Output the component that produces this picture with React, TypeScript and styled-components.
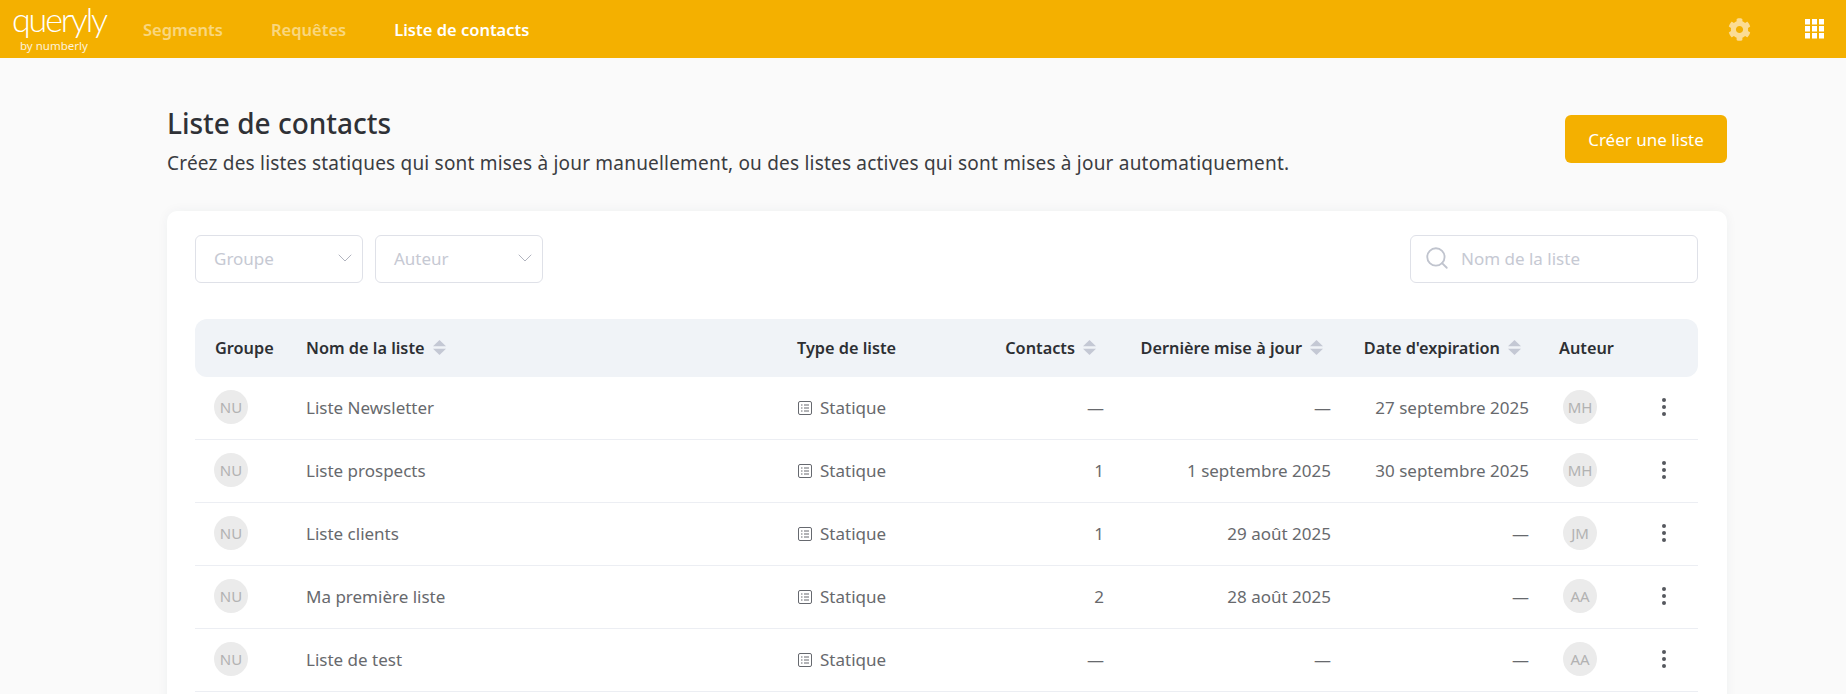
import React from "react";
import styled, { createGlobalStyle } from "styled-components";
import { FaCog } from "react-icons/fa";
import { ChevronDown, Search } from "lucide-react";

const GlobalStyle = createGlobalStyle`
  html, body {
    margin: 0;
    height: 100%;
    overflow: hidden;
    background: #fafafa;
    font-family: "Noto Sans", "Open Sans", sans-serif;
  }
  * {
    box-sizing: border-box;
  }
`;

const TopBar = styled("header")`
  height: 58px;
  background: #f4b000;
  display: flex;
  align-items: center;
  padding-right: 22px;
`;

const Logo = styled("div")`
  width: 143px;
  align-self: flex-start;
  padding: 2px 0 0 12px;
  color: white;
  display: flex;
  flex-direction: column;
  align-items: flex-start;
`;

const LogoName = styled("span")`
  font-family: "Lato", sans-serif;
  font-weight: 300;
  font-size: 34px;
  line-height: 34px;
  letter-spacing: -2.1px;
`;

const LogoSub = styled("span")`
  font-size: 11.5px;
  line-height: 14px;
  margin: 3px 0 0 8px;
  opacity: 0.85;
`;

const Nav = styled("nav")`
  display: flex;
  gap: 48px;
  flex: 1;
`;

const NavLink = styled("a")<{ $active?: boolean }>`
  font-size: 16.5px;
  font-weight: 600;
  color: ${(p) => (p.$active ? "#ffffff" : "rgba(255, 255, 255, 0.5)")};
`;

const BarIcons = styled("div")`
  display: flex;
  align-items: center;
  gap: 54px;
  color: #fbdc94;
`;

const Main = styled("main")`
  padding: 48px 119px 0 167px;
`;

const PageHead = styled("div")`
  display: flex;
  justify-content: space-between;
  align-items: flex-start;
  margin-bottom: 34px;
`;

const Title = styled("h1")`
  margin: 0 0 9px;
  font-size: 28px;
  line-height: 34px;
  font-weight: 500;
  color: #2f3136;
`;

const Subtitle = styled("p")`
  margin: 0;
  font-size: 19px;
  line-height: 28px;
  letter-spacing: 0.2px;
  color: #3a3c41;
`;

const PrimaryButton = styled("button")`
  width: 162px;
  height: 48px;
  margin-top: 9px;
  border: 0;
  border-radius: 6px;
  background: #f4b000;
  color: white;
  font-family: inherit;
  font-size: 17px;
`;

const Card = styled("section")`
  background: white;
  border-radius: 10px;
  padding: 24px 29px 28px 28px;
  box-shadow: 0 0 12px rgba(40, 50, 70, 0.05);
`;

const Filters = styled("div")`
  display: flex;
  gap: 12px;
  margin-bottom: 36px;
`;

const SelectBox = styled("button")`
  width: 168px;
  height: 48px;
  padding: 0 5px 2px 18px;
  display: flex;
  align-items: center;
  justify-content: space-between;
  background: white;
  border: 1px solid #dfe1e8;
  border-radius: 6px;
  font-family: inherit;
  font-size: 17px;
  color: #c6c9d3;
`;

const SearchBox = styled("label")`
  margin-left: auto;
  width: 288px;
  height: 48px;
  padding: 0 14px 2px 13px;
  display: flex;
  align-items: center;
  gap: 11px;
  border: 1px solid #dfe1e8;
  border-radius: 6px;
  color: #c0c4ce;
`;

const SearchInput = styled("input")`
  flex: 1;
  min-width: 0;
  border: 0;
  outline: 0;
  padding: 0;
  font-family: inherit;
  font-size: 17px;
  &::placeholder {
    color: #c6c9d3;
    opacity: 1;
  }
`;

const columns = "91px 491px 170px 137px 227px 198px 101px 68px";

const HeadRow = styled("div")`
  display: grid;
  grid-template-columns: ${columns};
  align-items: center;
  height: 58px;
  padding: 0 0 1px 20px;
  background: #f0f3f7;
  border-radius: 12px;
`;

const HeadCell = styled("div")<{ $right?: boolean; $pad?: boolean }>`
  display: flex;
  align-items: center;
  gap: 8px;
  font-size: 16.3px;
  font-weight: 600;
  white-space: nowrap;
  color: #2d2f33;
  justify-content: ${(p) => (p.$right ? "flex-end" : "flex-start")};
  padding-right: ${(p) => (p.$right ? "8px" : "0")};
  padding-left: ${(p) => (p.$pad ? "30px" : "0")};
`;

const Row = styled("div")`
  display: grid;
  grid-template-columns: ${columns};
  align-items: center;
  height: 63px;
  padding-left: 20px;
  border-bottom: 1px solid #eceef3;
  font-size: 17px;
  color: #67696d;
`;

const Cell = styled("div")<{ $right?: boolean }>`
  white-space: nowrap;
  margin-top: -1px;
  text-align: ${(p) => (p.$right ? "right" : "left")};
`;

const TypeCell = styled("div")`
  display: flex;
  align-items: center;
  gap: 8px;
  padding-left: 1px;
  margin-top: -1px;
`;

const Avatar = styled("span")<{ $author?: boolean }>`
  display: flex;
  align-items: center;
  justify-content: center;
  width: 34px;
  height: 34px;
  margin-top: -2px;
  margin-left: ${(p) => (p.$author ? "34px" : "-1px")};
  border-radius: 50%;
  background: #ebebeb;
  color: #b2b2b2;
  font-size: 15px;
`;

const Kebab = styled("div")`
  display: flex;
  justify-content: center;
  margin-top: -3px;
  color: #55585e;
`;

const SortArrows = () => (
  <svg width="13" height="15" viewBox="0 0 13 15" fill="#c4c8d4">
    <path d="M6.5 0 L13 6.3 H0 Z" />
    <path d="M0 8.7 H13 L6.5 15 Z" />
  </svg>
);

const ListIcon = () => (
  <svg width="14" height="14" viewBox="0 0 14 14" fill="none" stroke="#66696f" strokeWidth="1">
    <rect x="0.5" y="0.5" width="13" height="13" rx="1.5" />
    <path d="M3 4H4.5M6 4H11M3 7H4.5M6 7H11M3 10H4.5M6 10H11" />
  </svg>
);

const WaffleIcon = () => (
  <svg width="19" height="20" viewBox="0 0 19 20" fill="white">
    {[0, 7, 14].map((y) =>
      [0, 7, 14].map((x) => <rect key={`${x}-${y}`} x={x} y={y} width="5" height="5.5" />)
    )}
  </svg>
);

const DotsIcon = () => (
  <svg width="4" height="18" viewBox="0 0 4 18" fill="currentColor">
    <circle cx="2" cy="2" r="2" />
    <circle cx="2" cy="9" r="2" />
    <circle cx="2" cy="16" r="2" />
  </svg>
);

const lists = [
  { name: "Liste Newsletter", contacts: "—", updated: "—", expires: "27 septembre 2025", author: "MH" },
  { name: "Liste prospects", contacts: "1", updated: "1 septembre 2025", expires: "30 septembre 2025", author: "MH" },
  { name: "Liste clients", contacts: "1", updated: "29 août 2025", expires: "—", author: "JM" },
  { name: "Ma première liste", contacts: "2", updated: "28 août 2025", expires: "—", author: "AA" },
  { name: "Liste de test", contacts: "—", updated: "—", expires: "—", author: "AA" },
];

const App = () => {
  return (
    <>
      <GlobalStyle />
      <TopBar>
        <Logo>
          <LogoName>queryly</LogoName>
          <LogoSub>by numberly</LogoSub>
        </Logo>
        <Nav>
          <NavLink>Segments</NavLink>
          <NavLink>Requêtes</NavLink>
          <NavLink $active>Liste de contacts</NavLink>
        </Nav>
        <BarIcons>
          <FaCog size={23} />
          <WaffleIcon />
        </BarIcons>
      </TopBar>
      <Main>
        <PageHead>
          <div>
            <Title>Liste de contacts</Title>
            <Subtitle>
              Créez des listes statiques qui sont mises à jour manuellement, ou des listes actives qui sont mises à jour automatiquement.
            </Subtitle>
          </div>
          <PrimaryButton>Créer une liste</PrimaryButton>
        </PageHead>
        <Card>
          <Filters>
            <SelectBox>
              Groupe
              <ChevronDown size={24} strokeWidth={0.9} color="#a8acb8" />
            </SelectBox>
            <SelectBox>
              Auteur
              <ChevronDown size={24} strokeWidth={0.9} color="#a8acb8" />
            </SelectBox>
            <SearchBox>
              <Search size={26} strokeWidth={1.7} />
              <SearchInput placeholder="Nom de la liste" />
            </SearchBox>
          </Filters>
          <HeadRow>
            <HeadCell>Groupe</HeadCell>
            <HeadCell>
              Nom de la liste
              <SortArrows />
            </HeadCell>
            <HeadCell>Type de liste</HeadCell>
            <HeadCell $right>
              Contacts
              <SortArrows />
            </HeadCell>
            <HeadCell $right>
              Dernière mise à jour
              <SortArrows />
            </HeadCell>
            <HeadCell $right>
              Date d'expiration
              <SortArrows />
            </HeadCell>
            <HeadCell $pad>Auteur</HeadCell>
          </HeadRow>
          {lists.map((list) => (
            <Row key={list.name}>
              <Avatar>NU</Avatar>
              <Cell>{list.name}</Cell>
              <TypeCell>
                <ListIcon />
                Statique
              </TypeCell>
              <Cell $right>{list.contacts}</Cell>
              <Cell $right>{list.updated}</Cell>
              <Cell $right>{list.expires}</Cell>
              <Avatar $author>{list.author}</Avatar>
              <Kebab>
                <DotsIcon />
              </Kebab>
            </Row>
          ))}
        </Card>
      </Main>
    </>
  );
};

export default App;
